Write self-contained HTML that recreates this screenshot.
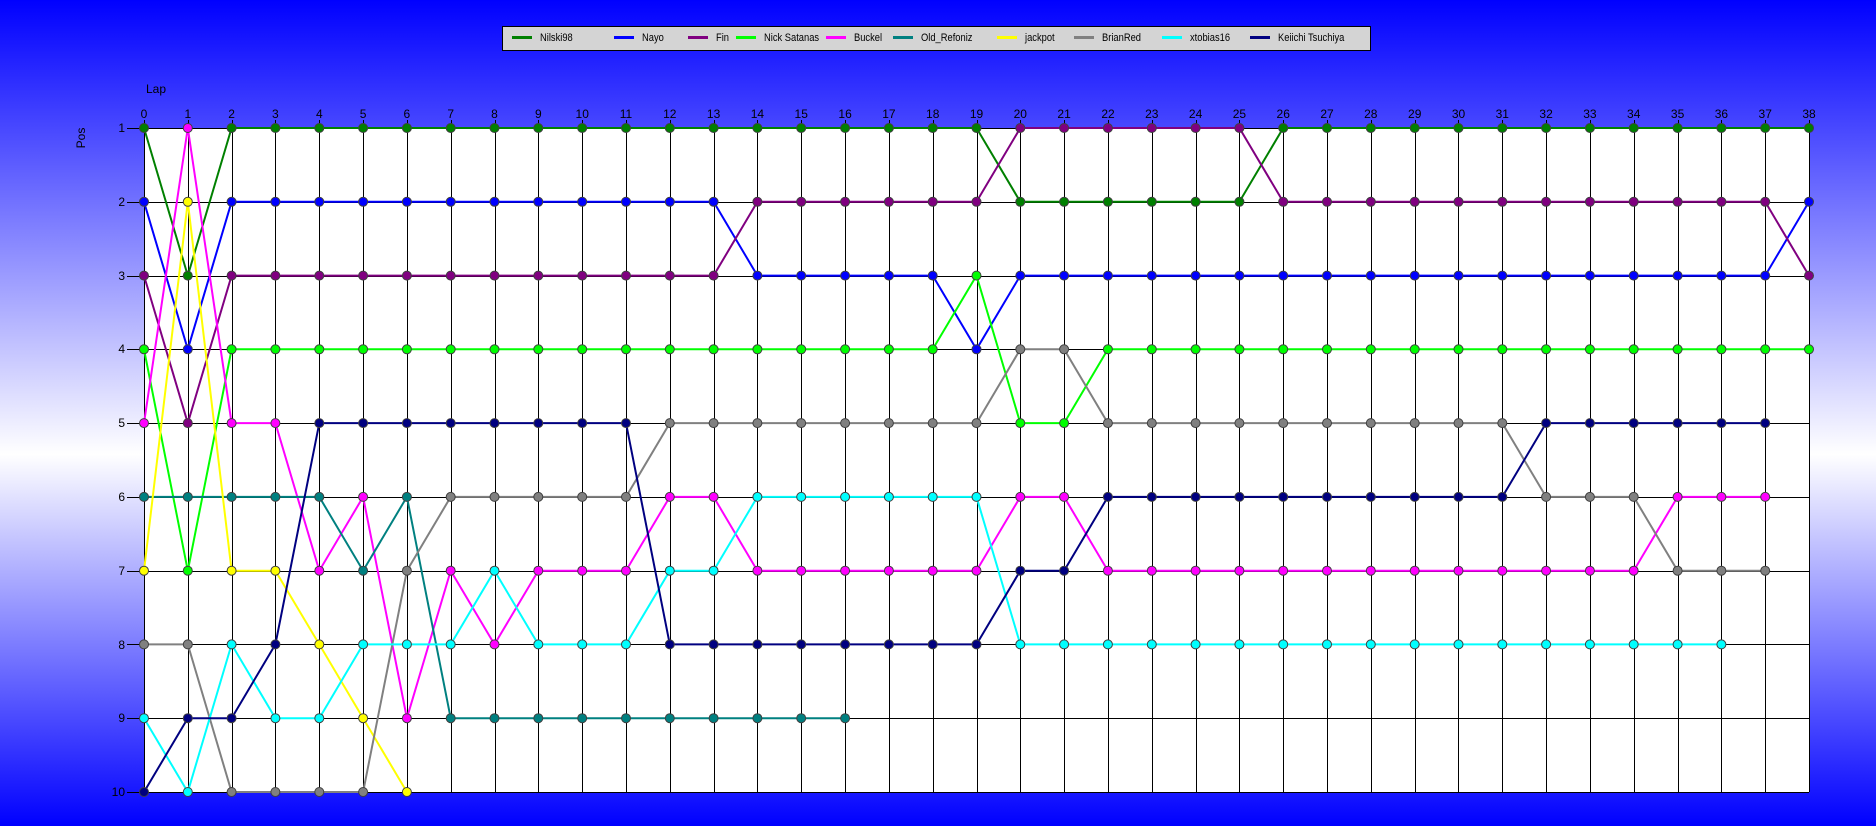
<!DOCTYPE html>
<html><head><meta charset="utf-8">
<style>
html,body{margin:0;padding:0;}
body{width:1876px;height:826px;overflow:hidden;position:relative;background:linear-gradient(to bottom,#0000ff 0%,#ffffff 55%,#0000ff 100%);font-family:"Liberation Sans",sans-serif;}
#legend{position:absolute;left:502px;top:26px;width:867px;height:23px;background:#d4d4d4;border:1px solid #000;}
.it{position:absolute;top:5px;font-size:11px;line-height:13px;color:#000;white-space:nowrap;}
.it i{display:inline-block;width:20px;height:3px;vertical-align:middle;margin-right:8px;margin-top:-2px;}
.it b{font-weight:normal;display:inline-block;transform:scaleX(0.85);transform-origin:left center;}
svg{position:absolute;left:0;top:0;}
</style></head><body>
<svg id="s" width="1876" height="826" xmlns="http://www.w3.org/2000/svg" font-family="Liberation Sans, sans-serif" font-size="12">
<rect x="144" y="128" width="1665" height="664" fill="#fff"/>
<g id="grid" stroke="#000" stroke-width="1"></g>
<g id="lines" fill="none" stroke-width="2"></g>
<g id="marks" stroke="#404040" stroke-width="1"></g>
<text x="146" y="93">Lap</text>
<text x="0" y="0" transform="translate(85,138) rotate(-90)" text-anchor="middle">Pos</text>
<g text-anchor="middle">
<text x="144" y="118">0</text><text x="187.8" y="118">1</text><text x="231.6" y="118">2</text><text x="275.4" y="118">3</text><text x="319.3" y="118">4</text><text x="363.1" y="118">5</text><text x="406.9" y="118">6</text><text x="450.7" y="118">7</text><text x="494.5" y="118">8</text><text x="538.3" y="118">9</text><text x="582.2" y="118">10</text><text x="626" y="118">11</text><text x="669.8" y="118">12</text><text x="713.6" y="118">13</text><text x="757.4" y="118">14</text><text x="801.2" y="118">15</text><text x="845.1" y="118">16</text><text x="888.9" y="118">17</text><text x="932.7" y="118">18</text><text x="976.5" y="118">19</text><text x="1020.3" y="118">20</text><text x="1064.1" y="118">21</text><text x="1108" y="118">22</text><text x="1151.8" y="118">23</text><text x="1195.6" y="118">24</text><text x="1239.4" y="118">25</text><text x="1283.2" y="118">26</text><text x="1327" y="118">27</text><text x="1370.8" y="118">28</text><text x="1414.7" y="118">29</text><text x="1458.5" y="118">30</text><text x="1502.3" y="118">31</text><text x="1546.1" y="118">32</text><text x="1589.9" y="118">33</text><text x="1633.7" y="118">34</text><text x="1677.6" y="118">35</text><text x="1721.4" y="118">36</text><text x="1765.2" y="118">37</text><text x="1809" y="118">38</text>
</g>
<g text-anchor="end">
<text x="125" y="132">1</text><text x="125" y="206">2</text><text x="125" y="280">3</text><text x="125" y="353">4</text><text x="125" y="427">5</text><text x="125" y="501">6</text><text x="125" y="575">7</text><text x="125" y="649">8</text><text x="125" y="722">9</text><text x="125" y="796">10</text>
</g>
</svg>
<div id="legend">
<span class="it" style="left:9px"><i style="background:#008000"></i><b>Nilski98</b></span>
<span class="it" style="left:111px"><i style="background:#0000ff"></i><b>Nayo</b></span>
<span class="it" style="left:185px"><i style="background:#800080"></i><b>Fin</b></span>
<span class="it" style="left:233px"><i style="background:#00ff00"></i><b>Nick Satanas</b></span>
<span class="it" style="left:323px"><i style="background:#ff00ff"></i><b>Buckel</b></span>
<span class="it" style="left:390px"><i style="background:#008080"></i><b>Old_Refoniz</b></span>
<span class="it" style="left:494px"><i style="background:#ffff00"></i><b>jackpot</b></span>
<span class="it" style="left:571px"><i style="background:#808080"></i><b>BrianRed</b></span>
<span class="it" style="left:659px"><i style="background:#00ffff"></i><b>xtobias16</b></span>
<span class="it" style="left:747px"><i style="background:#000080"></i><b>Keiichi Tsuchiya</b></span>
</div>
<script>
var NS="http://www.w3.org/2000/svg";
function X(l){return 144+l*(1665/38);}
function Y(p){return 128+(p-1)*(664/9);}
function el(t,a,p){var e=document.createElementNS(NS,t);for(var k in a)e.setAttribute(k,a[k]);p.appendChild(e);return e;}
var g=document.getElementById('grid');
for(var l=0;l<=38;l++){var x=Math.round(X(l))+0.5;el('line',{x1:x,y1:120,x2:x,y2:792},g);}
for(var p=1;p<=10;p++){var y=Math.round(Y(p))+0.5;el('line',{x1:127,y1:y,x2:1809,y2:y},g);}
function b(segs){var a=[];segs.forEach(function(s){for(var i=s[0];i<=s[1];i++)a[i]=s[2];});return a;}
var D=[
["#008000",b([[0,0,1],[1,1,3],[2,19,1],[20,25,2],[26,38,1]])],
["#0000ff",b([[0,0,2],[1,1,4],[2,13,2],[14,18,3],[19,19,4],[20,37,3],[38,38,2]])],
["#800080",b([[0,0,3],[1,1,5],[2,13,3],[14,19,2],[20,25,1],[26,37,2],[38,38,3]])],
["#00ff00",b([[0,0,4],[1,1,7],[2,18,4],[19,19,3],[20,21,5],[22,38,4]])],
["#ff00ff",b([[0,0,5],[1,1,1],[2,3,5],[4,4,7],[5,5,6],[6,6,9],[7,7,7],[8,8,8],[9,11,7],[12,13,6],[14,19,7],[20,21,6],[22,34,7],[35,37,6]])],
["#008080",b([[0,4,6],[5,5,7],[6,6,6],[7,16,9]])],
["#ffff00",b([[0,0,7],[1,1,2],[2,3,7],[4,4,8],[5,5,9],[6,6,10]])],
["#808080",b([[0,1,8],[2,5,10],[6,6,7],[7,11,6],[12,19,5],[20,21,4],[22,31,5],[32,34,6],[35,37,7]])],
["#00ffff",b([[0,0,9],[1,1,10],[2,2,8],[3,4,9],[5,7,8],[8,8,7],[9,11,8],[12,13,7],[14,19,6],[20,36,8]])],
["#000080",b([[0,0,10],[1,2,9],[3,3,8],[4,11,5],[12,19,8],[20,21,7],[22,31,6],[32,37,5]])]
];
var L=document.getElementById('lines'),M=document.getElementById('marks');
D.forEach(function(d){var pts=[];d[1].forEach(function(p,i){if(p)pts.push(X(i).toFixed(1)+','+Y(p).toFixed(1));});
el('polyline',{points:pts.join(' '),stroke:d[0]},L);});
D.forEach(function(d){d[1].forEach(function(p,i){if(p)el('circle',{cx:X(i).toFixed(1),cy:Y(p).toFixed(1),r:4.5,fill:d[0]},M);});});
</script>
</body></html>
